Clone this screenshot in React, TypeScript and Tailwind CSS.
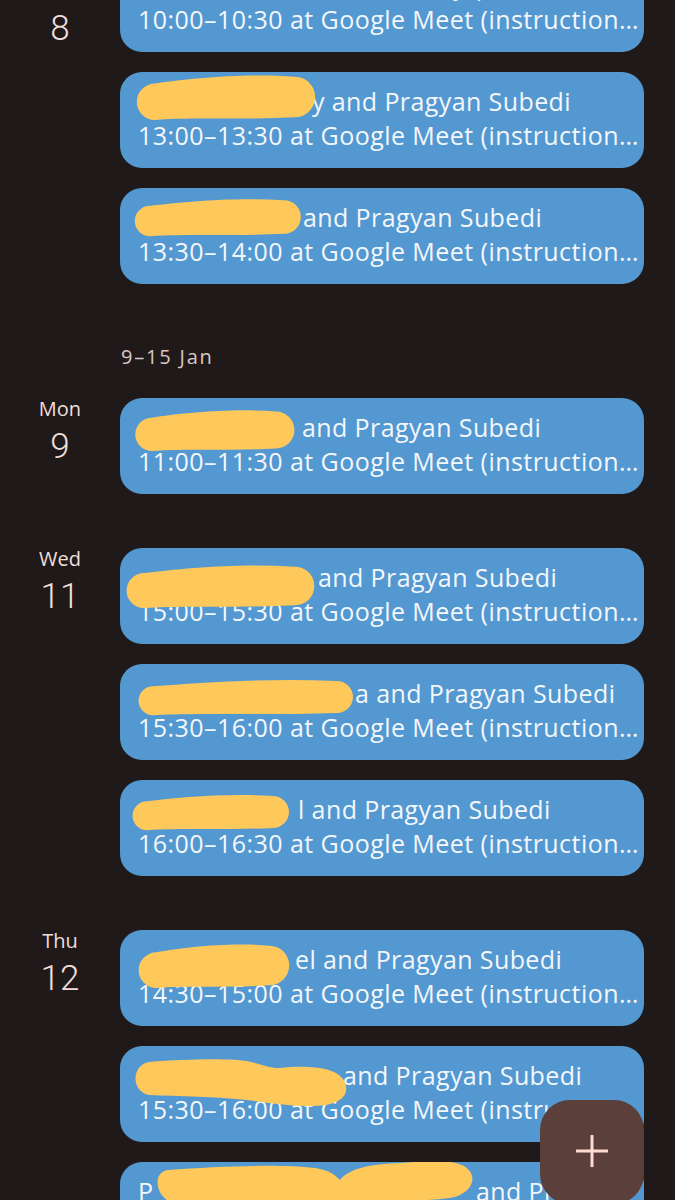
import React from "react";

type Blob = { left: number; top: number; width: number; height: number; d?: string };

type Ev = {
  hidden: string;
  hiddenW: number;
  rest: string;
  time: string;
  blob?: Blob;
};

const FONT = "'Open Sans', Roboto, 'Noto Sans', sans-serif";

function BlobShape({ b }: { b: Blob }) {
  const w = b.width;
  const h = b.height;
  return (
    <svg
      className="pointer-events-none absolute"
      style={{ left: b.left, top: b.top }}
      width={w}
      height={h}
      viewBox={`0 0 ${w} ${h}`}
    >
      <path
        d={
          b.d ??
          `M ${h / 2} ${h * 0.22} C ${w * 0.3} ${h * 0.12}, ${w * 0.6} ${h * 0.0}, ${w - h / 2} ${h * 0.08} A ${h * 0.42} ${h * 0.42} 0 0 1 ${w - h / 2} ${h * 0.92} C ${w * 0.6} ${h * 0.98}, ${w * 0.3} ${h * 0.92}, ${h / 2} ${h * 0.98} A ${h * 0.38} ${h * 0.38} 0 0 1 ${h / 2} ${h * 0.22} Z`
        }
        fill="#fec85b"
      />
    </svg>
  );
}

function Card({ ev }: { ev: Ev }) {
  return (
    <div
      className="relative h-[96px] min-w-0 shrink-0 overflow-hidden rounded-[22px] bg-[#5398d0] pb-[16px] pl-[18px] pr-[4px] pt-[12px] text-[#f3f7fc]"
      style={{ fontFamily: FONT }}
    >
      <div className="truncate whitespace-nowrap text-[25px] font-medium leading-[34px] tracking-[0.4px]">
        <span
          className="inline-block overflow-hidden whitespace-nowrap align-top"
          style={{ width: ev.hiddenW }}
        >
          {ev.hidden}
        </span>
        {ev.rest}
      </div>
      <div className="truncate whitespace-nowrap text-[25px] leading-[34px] tracking-[0.45px]">
        {ev.time}
      </div>
      {ev.blob && <BlobShape b={ev.blob} />}
    </div>
  );
}

function DayLabel({ wd, n }: { wd?: string; n: string }) {
  return (
    <div className="flex w-[120px] shrink-0 flex-col items-center text-[#f1dedb]" style={{ fontFamily: FONT }}>
      {wd && <div className="mt-[-2px] text-[20px] leading-[26px]">{wd}</div>}
      <div
        className="mt-[5px] text-[35px] font-light leading-[40px]"
        style={{ fontFamily: "Roboto, 'Noto Sans', sans-serif" }}
      >
        {n}
      </div>
    </div>
  );
}

function Day({ wd, n, evs, className = "" }: { wd: string; n: string; evs: Ev[]; className?: string }) {
  return (
    <div className={`flex pr-[31px] ${className}`}>
      <DayLabel wd={wd} n={n} />
      <div className="flex min-w-0 flex-1 flex-col gap-[20px]">
        {evs.map((e, i) => (
          <Card key={i} ev={e} />
        ))}
      </div>
    </div>
  );
}

const TAIL = " at Google Meet (instructions in description)";

export default function App() {
  const day8: Ev[] = [
    {
      hidden: "",
      hiddenW: 0,
      rest: "Session with Someone Prajapati and Pragyan Subedi",
      time: "10:00–10:30" + TAIL,
    },
    {
      hidden: "",
      hiddenW: 174,
      rest: "y and Pragyan Subedi",
      time: "13:00–13:30" + TAIL,
      blob: { left: 11, top: 1, width: 188, height: 48 },
    },
    {
      hidden: "",
      hiddenW: 165,
      rest: "and Pragyan Subedi",
      time: "13:30–14:00" + TAIL,
      blob: { left: 10, top: 9, width: 174, height: 40 },
    },
  ];
  const day9: Ev[] = [
    {
      hidden: "",
      hiddenW: 164,
      rest: "and Pragyan Subedi",
      time: "11:00–11:30" + TAIL,
      blob: { left: 10, top: 10, width: 168, height: 44 },
    },
  ];
  const day11: Ev[] = [
    {
      hidden: "",
      hiddenW: 180,
      rest: "and Pragyan Subedi",
      time: "15:00–15:30" + TAIL,
      blob: { left: 1, top: 15, width: 197, height: 46 },
    },
    {
      hidden: "",
      hiddenW: 217,
      rest: "a and Pragyan Subedi",
      time: "15:30–16:00" + TAIL,
      blob: { left: 14, top: 14, width: 222, height: 38 },
    },
    {
      hidden: "",
      hiddenW: 160,
      rest: "l and Pragyan Subedi",
      time: "16:00–16:30" + TAIL,
      blob: { left: 8, top: 13, width: 164, height: 38 },
    },
  ];
  const day12: Ev[] = [
    {
      hidden: "",
      hiddenW: 157,
      rest: "el and Pragyan Subedi",
      time: "14:30–15:00" + TAIL,
      blob: { left: 13, top: 12, width: 160, height: 47 },
    },
    {
      hidden: "",
      hiddenW: 205,
      rest: "and Pragyan Subedi",
      time: "15:30–16:00" + TAIL,
      blob: {
        left: 9,
        top: 13,
        width: 226,
        height: 48,
        d: "M 20 3 C 60 0, 105 -1, 122 3 C 135 6, 140 9, 150 9 C 180 6, 205 8, 214 20 C 224 36, 210 47, 185 47 C 160 47, 140 44, 118 41 C 88 38, 50 37, 20 36 C 2 33, 2 6, 20 3 Z",
      },
    },
    {
      hidden: "P",
      hiddenW: 338,
      rest: "and Pragyan Subedi",
      time: "16:30–17:00" + TAIL,
      blob: {
        left: 30,
        top: -2,
        width: 326,
        height: 44,
        d: "M 18 10 C 70 6, 130 4, 165 8 C 180 10, 186 16, 190 20 C 200 8, 220 4, 250 3 C 280 1, 300 -1, 314 6 C 330 16, 322 34, 300 38 C 270 42, 240 40, 200 40 C 160 42, 90 44, 30 44 C 6 44, 0 12, 18 10 Z",
      },
    },
  ];

  return (
    <div className="relative h-[1200px] w-[675px] overflow-hidden bg-[#1f1a19]">
      <div className="flex flex-col">
        {/* Day 8 (label stuck at top) */}
        <div className="flex pr-[31px]">
          <div className="w-[120px] shrink-0">
            <div className="mt-[9px] flex justify-center">
              <div
                className="text-[35px] font-light leading-[40px] text-[#f1dedb]"
                style={{ fontFamily: "Roboto, 'Noto Sans', sans-serif" }}
              >
                8
              </div>
            </div>
          </div>
          <div className="mt-[-44px] flex min-w-0 flex-1 flex-col gap-[20px]">
            {day8.map((e, i) => (
              <Card key={i} ev={e} />
            ))}
          </div>
        </div>

        <div
          className="mt-[61px] pl-[121px] text-[20px] leading-[24px] tracking-[1.8px] text-[#dcc6c3]"
          style={{ fontFamily: FONT }}
        >
          9–15 Jan
        </div>

        <Day className="mt-[29px]" wd="Mon" n="9" evs={day9} />
        <Day className="mt-[54px]" wd="Wed" n="11" evs={day11} />
        <Day className="mt-[54px]" wd="Thu" n="12" evs={day12} />
      </div>

      {/* Floating action button */}
      <div className="absolute left-[540px] top-[1100px] flex h-[104px] w-[104px] items-center justify-center rounded-[30px] bg-[#5a3f3b]">
        <svg width="34" height="34" viewBox="0 0 34 34" className="mt-[-2px]">
          <path d="M17 1 V33 M1 17 H33" stroke="#ffd9d2" strokeWidth="3" />
        </svg>
      </div>
    </div>
  );
}
